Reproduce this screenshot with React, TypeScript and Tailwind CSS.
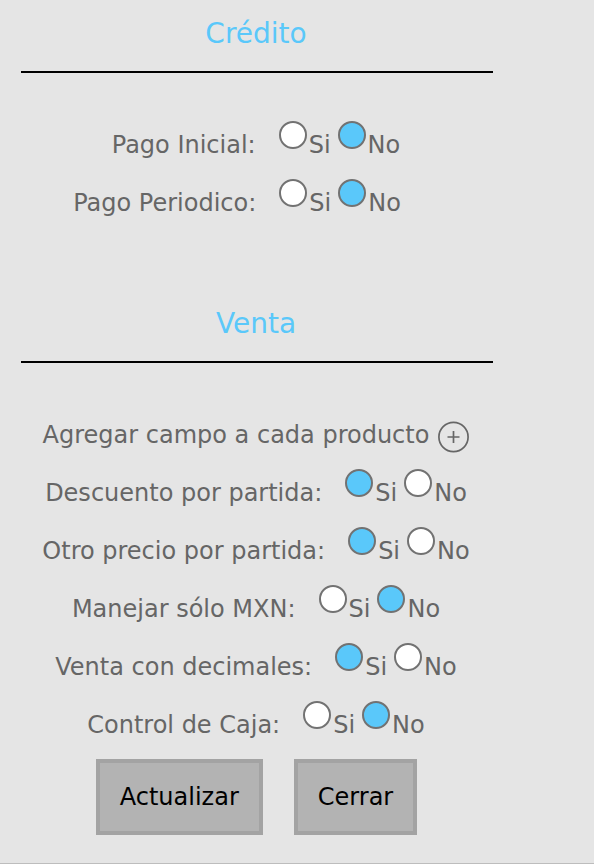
import React from "react";

type Choice = "si" | "no";

function Option({ name, value, label, checked }: { name: string; value: Choice; label: string; checked: boolean }) {
  return (
    <label className="flex items-start">
      <input
        type="radio"
        name={name}
        value={value}
        defaultChecked={checked}
        className="mr-0.5 h-7 w-7 appearance-none rounded-full border-2 border-[#727272] bg-white checked:bg-[#5ac8fa]"
      />
      <span className="pt-2">{label}</span>
    </label>
  );
}

function RadioRow({ name, label, value, inset = false }: { name: string; label: string; value: Choice; inset?: boolean }) {
  return (
    <fieldset className={`flex h-[58px] items-start justify-center ${inset ? "pr-10" : "pr-0.5"}`}>
      <legend className="float-left pt-2 pr-[23px]">{label}</legend>
      <div className="flex gap-[7px]">
        <Option name={name} value="si" label="Si" checked={value === "si"} />
        <Option name={name} value="no" label="No" checked={value === "no"} />
      </div>
    </fieldset>
  );
}

function Heading({ children }: { children: React.ReactNode }) {
  return (
    <h2 className="mb-12 border-b-2 border-black pr-0.5 pb-[21px] text-center text-[28px] leading-8 text-[#5ac8fa]">
      {children}
    </h2>
  );
}

export default function App() {
  return (
    <main className="border-b border-[#bdbdbd] bg-[#e5e5e5] pt-[18px] pr-[101px] pb-7 pl-[21px] font-['DejaVu_Sans',sans-serif] text-2xl leading-8 text-[#666]">
      <section className="mb-[71px]">
        <Heading>Crédito</Heading>
        <RadioRow name="inicial" label="Pago Inicial:" value="no" />
        <RadioRow name="periodico" label="Pago Periodico:" value="no" inset />
      </section>
      <section>
        <Heading>Venta</Heading>
        <div className="flex h-[58px] items-start justify-center gap-2 pt-2 pr-0.5">
          <span>Agregar campo a cada producto</span>
          <button type="button" aria-label="Agregar campo" className="pt-0.5">
            <svg viewBox="0 0 32 32" className="h-8 w-8" fill="none" stroke="#666" strokeWidth="1.7">
              <circle cx="16.5" cy="16" r="14.6" />
              <path d="M10.5 16h12M16.5 10v12" />
            </svg>
          </button>
        </div>
        <RadioRow name="descuento" label="Descuento por partida:" value="si" />
        <RadioRow name="precio" label="Otro precio por partida:" value="si" />
        <RadioRow name="mxn" label="Manejar sólo MXN:" value="no" />
        <RadioRow name="decimales" label="Venta con decimales:" value="si" />
        <RadioRow name="caja" label="Control de Caja:" value="no" />
      </section>
      <div className="flex justify-center gap-[31px] pr-px text-black">
        <button type="button" className="h-19 border-4 border-[#a3a3a3] bg-[#b3b3b3] px-5">Actualizar</button>
        <button type="button" className="h-19 border-4 border-[#a3a3a3] bg-[#b3b3b3] px-5">Cerrar</button>
      </div>
    </main>
  );
}
